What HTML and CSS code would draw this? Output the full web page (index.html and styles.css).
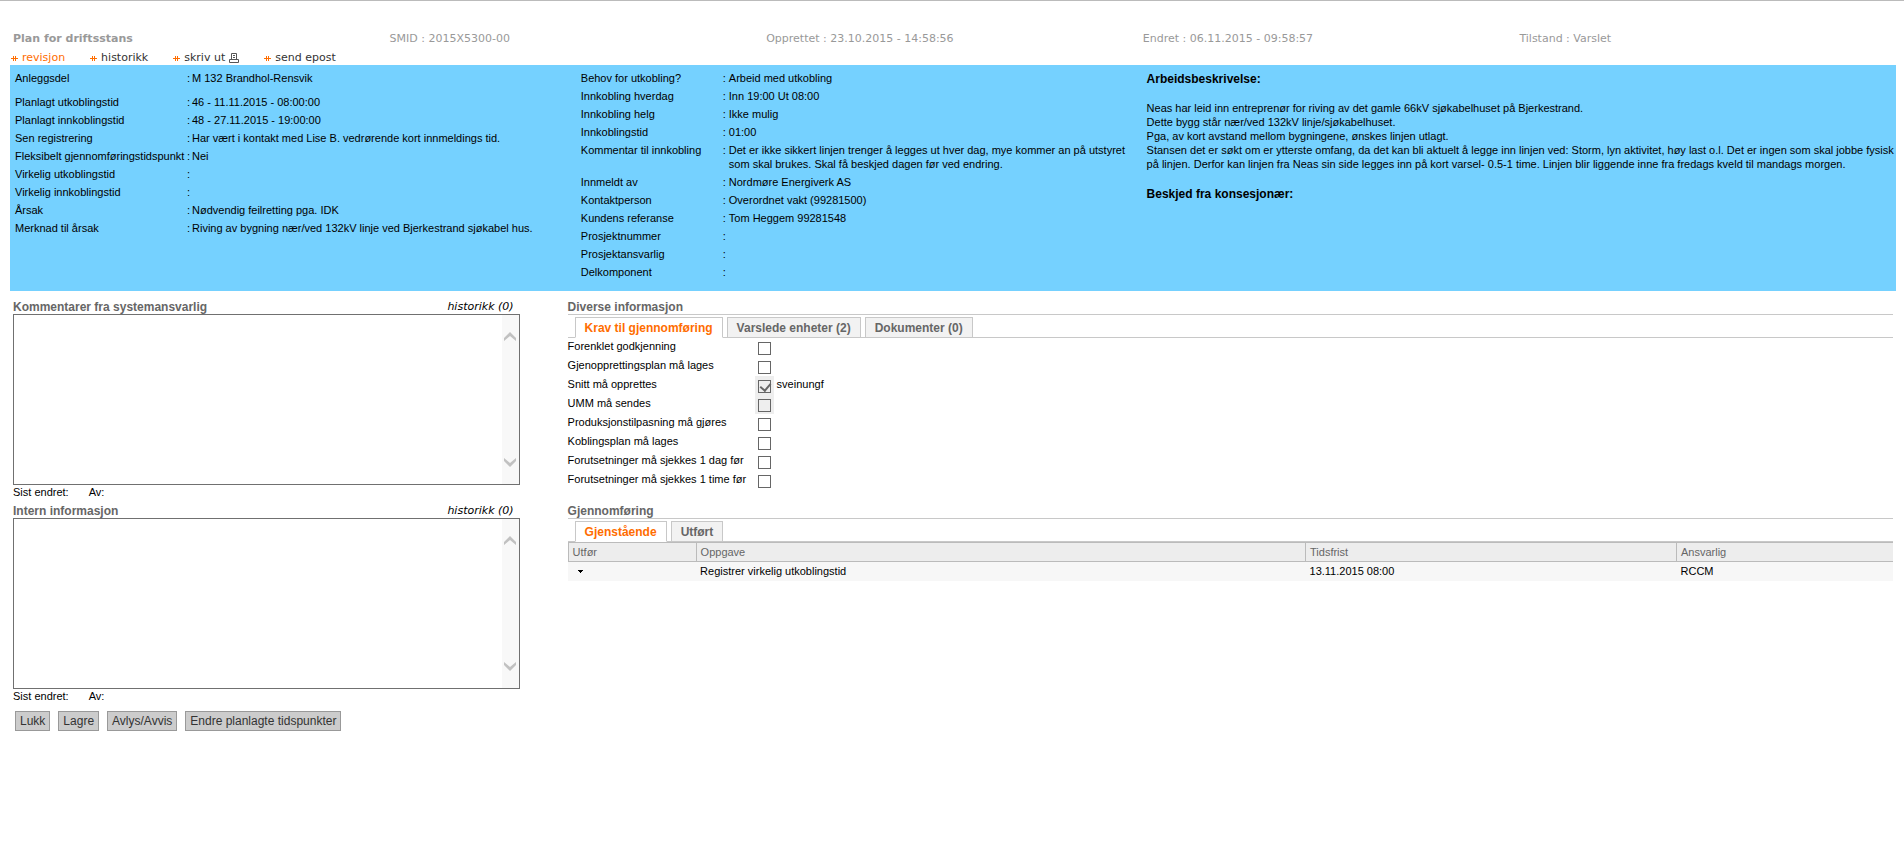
FILE: index.html
```html
<!DOCTYPE html>
<html lang="no">
<head>
<meta charset="utf-8">
<title>Plan for driftsstans</title>
<link rel="stylesheet" href="styles.css">
</head>
<body>
<svg class="defs" aria-hidden="true">
  <symbol id="arrow" viewBox="0 0 7 5"><path d="M0 2h7v1H0zM2 0h1v5H2zM4 0h1v5H4z"/></symbol>
  <symbol id="chev" viewBox="0 0 12 9"><path d="M6 0l6 6v3L6 4 0 9V6z"/></symbol>
</svg>
<header class="head">
  <h1 class="head-title">Plan for driftsstans</h1>
  <span>SMID : 2015X5300-00</span>
  <span>Opprettet : 23.10.2015 - 14:58:56</span>
  <span>Endret : 06.11.2015 - 09:58:57</span>
  <span>Tilstand : Varslet</span>
</header>
<nav class="nav">
  <a class="active" href="#"><svg class="arrow" viewBox="0 0 7 5"><use href="#arrow"/></svg>revisjon</a>
  <a href="#"><svg class="arrow" viewBox="0 0 7 5"><use href="#arrow"/></svg>historikk</a>
  <a href="#"><svg class="arrow" viewBox="0 0 7 5"><use href="#arrow"/></svg>skriv ut<svg class="printer" viewBox="0 0 10 10"><path d="M2.500 6.500v-6h5v6M4 2.500h2M4 4.500h2M.5 6.500h9v3h-9z"/></svg></a>
  <a href="#"><svg class="arrow" viewBox="0 0 7 5"><use href="#arrow"/></svg>send epost</a>
</nav>
<section class="info">
  <dl class="facts facts-plan">
    <div class="fact fact-lead"><dt>Anleggsdel</dt><dd>M 132 Brandhol-Rensvik</dd></div>
    <div class="fact"><dt>Planlagt utkoblingstid</dt><dd>46 - 11.11.2015 - 08:00:00</dd></div>
    <div class="fact"><dt>Planlagt innkoblingstid</dt><dd>48 - 27.11.2015 - 19:00:00</dd></div>
    <div class="fact"><dt>Sen registrering</dt><dd>Har vært i kontakt med Lise B. vedrørende kort innmeldings tid.</dd></div>
    <div class="fact"><dt>Fleksibelt gjennomføringstidspunkt</dt><dd>Nei</dd></div>
    <div class="fact"><dt>Virkelig utkoblingstid</dt><dd></dd></div>
    <div class="fact"><dt>Virkelig innkoblingstid</dt><dd></dd></div>
    <div class="fact"><dt>Årsak</dt><dd>Nødvendig feilretting pga. IDK</dd></div>
    <div class="fact"><dt>Merknad til årsak</dt><dd>Riving av bygning nær/ved 132kV linje ved Bjerkestrand sjøkabel hus.</dd></div>
  </dl>
  <dl class="facts facts-work">
    <div class="fact"><dt>Behov for utkobling?</dt><dd>Arbeid med utkobling</dd></div>
    <div class="fact"><dt>Innkobling hverdag</dt><dd>Inn 19:00 Ut 08:00</dd></div>
    <div class="fact"><dt>Innkobling helg</dt><dd>Ikke mulig</dd></div>
    <div class="fact"><dt>Innkoblingstid</dt><dd>01:00</dd></div>
    <div class="fact"><dt>Kommentar til innkobling</dt><dd>Det er ikke sikkert linjen trenger å legges ut hver dag, mye kommer an på utstyret som skal brukes. Skal få beskjed dagen før ved endring.</dd></div>
    <div class="fact"><dt>Innmeldt av</dt><dd>Nordmøre Energiverk AS</dd></div>
    <div class="fact"><dt>Kontaktperson</dt><dd>Overordnet vakt (99281500)</dd></div>
    <div class="fact"><dt>Kundens referanse</dt><dd>Tom Heggem 99281548</dd></div>
    <div class="fact"><dt>Prosjektnummer</dt><dd></dd></div>
    <div class="fact"><dt>Prosjektansvarlig</dt><dd></dd></div>
    <div class="fact"><dt>Delkomponent</dt><dd></dd></div>
  </dl>
  <div class="desc">
    <h2>Arbeidsbeskrivelse:</h2>
    <p>Neas har leid inn entreprenør for riving av det gamle 66kV sjøkabelhuset på Bjerkestrand.<br>Dette bygg står nær/ved 132kV linje/sjøkabelhuset.<br>Pga, av kort avstand mellom bygningene, ønskes linjen utlagt.<br>Stansen det er søkt om er ytterste omfang, da det kan bli aktuelt å legge inn linjen ved: Storm, lyn aktivitet, høy last o.l. Det er ingen som skal jobbe fysisk på linjen. Derfor kan linjen fra Neas sin side legges inn på kort varsel- 0.5-1 time. Linjen blir liggende inne fra fredags kveld til mandags morgen.</p>
    <h2>Beskjed fra konsesjonær:</h2>
  </div>
</section>
<main class="main">
  <div class="notes">
    <section class="block">
      <div class="bar"><label class="title" for="kommentar">Kommentarer fra systemansvarlig</label><a class="history" href="#">historikk (0)</a></div>
      <div class="box"><textarea id="kommentar"></textarea><div class="scroll"><svg class="chev" viewBox="0 0 12 9"><use href="#chev"/></svg><svg class="chev down" viewBox="0 0 12 9"><use href="#chev"/></svg></div></div>
      <div class="meta"><span>Sist endret:</span><span>Av:</span></div>
    </section>
    <section class="block">
      <div class="bar"><label class="title" for="intern">Intern informasjon</label><a class="history" href="#">historikk (0)</a></div>
      <div class="box"><textarea id="intern"></textarea><div class="scroll"><svg class="chev" viewBox="0 0 12 9"><use href="#chev"/></svg><svg class="chev down" viewBox="0 0 12 9"><use href="#chev"/></svg></div></div>
      <div class="meta"><span>Sist endret:</span><span>Av:</span></div>
    </section>
    <div class="buttons">
      <button type="button">Lukk</button>
      <button type="button">Lagre</button>
      <button type="button">Avlys/Avvis</button>
      <button type="button">Endre planlagte tidspunkter</button>
    </div>
  </div>
  <div class="details">
    <section class="block">
      <div class="bar ruled"><h2 class="title">Diverse informasjon</h2></div>
      <div class="tabs"><button class="tab current" type="button">Krav til gjennomføring</button><button class="tab" type="button">Varslede enheter (2)</button><button class="tab" type="button">Dokumenter (0)</button></div>
      <div class="checks">
        <div class="check"><label for="c1">Forenklet godkjenning</label><span class="cell"><input type="checkbox" id="c1"></span></div>
        <div class="check"><label for="c2">Gjenopprettingsplan må lages</label><span class="cell"><input type="checkbox" id="c2"></span></div>
        <div class="check"><label for="c3">Snitt må opprettes</label><span class="cell locked"><input type="checkbox" id="c3" checked disabled></span><span class="user">sveinungf</span></div>
        <div class="check"><label for="c4">UMM må sendes</label><span class="cell locked"><input type="checkbox" id="c4" disabled></span></div>
        <div class="check"><label for="c5">Produksjonstilpasning må gjøres</label><span class="cell"><input type="checkbox" id="c5"></span></div>
        <div class="check"><label for="c6">Koblingsplan må lages</label><span class="cell"><input type="checkbox" id="c6"></span></div>
        <div class="check"><label for="c7">Forutsetninger må sjekkes 1 dag før</label><span class="cell"><input type="checkbox" id="c7"></span></div>
        <div class="check"><label for="c8">Forutsetninger må sjekkes 1 time før</label><span class="cell"><input type="checkbox" id="c8"></span></div>
      </div>
    </section>
    <section class="block">
      <div class="bar ruled"><h2 class="title">Gjennomføring</h2></div>
      <div class="tabs"><button class="tab current" type="button">Gjenstående</button><button class="tab" type="button">Utført</button></div>
      <table class="tasks">
        <colgroup><col class="c-do"><col class="c-task"><col class="c-due"><col class="c-who"></colgroup>
        <thead><tr><th>Utfør</th><th>Oppgave</th><th>Tidsfrist</th><th>Ansvarlig</th></tr></thead>
        <tbody><tr><td><button class="menu" type="button" aria-label="Utfør"><svg class="caret" viewBox="0 0 5 3"><path d="M0 0h5v1H4v1H3v1H2V2H1V1H0z"/></svg></button></td><td>Registrer virkelig utkoblingstid</td><td>13.11.2015 08:00</td><td>RCCM</td></tr></tbody>
      </table>
    </section>
  </div>
</main>
</body>
</html>
```
FILE: styles.css
```css
* { box-sizing: border-box; }
body {
  margin: 0;
  border-top: 1px solid #bbb;
  background: #fff;
  color: #000;
  font: 11px/14px "Liberation Sans", Arial, sans-serif;
}
h1, h2, p, dl, dd { margin: 0; font-size: inherit; }
a { color: inherit; text-decoration: none; }
.defs { display: none; }

.head {
  display: grid;
  grid-template-columns: repeat(5, 1fr);
  padding: 31px 8px 0 13px;
  color: #999;
  font: 11px/14px Verdana, "DejaVu Sans", sans-serif;
}
.head-title { font-weight: bold; }
.nav {
  display: flex;
  gap: 25px;
  height: 19px;
  padding: 5px 0 0 11px;
  color: #333;
  font: 11px/14px Verdana, "DejaVu Sans", sans-serif;
}
.nav a { display: flex; align-items: center; }
.nav .active { color: #ff6d00; }
.arrow { width: 7px; height: 5px; margin-right: 4px; fill: #ff6d00; shape-rendering: crispEdges; }
.printer { width: 10px; height: 10px; margin-left: 4px; fill: none; stroke: #555; }

.info {
  display: grid;
  grid-template-columns: 3fr 3fr 4fr;
  min-height: 226px;
  margin: 0 8px 0 10px;
  padding: 6px 0;
  background: #75d1ff;
}
.fact { display: grid; padding: 0 4px 4px 5px; }
.fact dt { white-space: nowrap; }
.fact dd { display: flex; }
.fact dd::before { content: ":"; }
.facts-plan .fact { grid-template-columns: 172px 1fr; }
.facts-plan .fact dd::before { flex: 0 0 5px; }
.facts-work .fact { grid-template-columns: 142px 1fr; }
.facts-work .fact dd::before { flex: 0 0 6px; }
.facts-plan .fact-lead { padding-bottom: 10px; }
.desc { padding: 1px 0 0 5px; }
.desc h2 { font-size: 12px; }
.desc p { padding: 15px 0 16px; }

.main {
  display: grid;
  grid-template-columns: 59fr 141fr;
  margin: 0 11px 0 13px;
  padding-top: 8px;
}
.notes { padding-right: 48px; }
.block { height: 204px; }
.bar { display: flex; justify-content: space-between; height: 15px; line-height: 16px; }
.ruled { height: 16px; border-bottom: 1px solid #c8c8c8; }
.title { color: #666; font-size: 12px; font-weight: bold; }
.history { padding-right: 6px; font: italic 11px/16px Verdana, "DejaVu Sans", sans-serif; }
.box { display: flex; height: 171px; border: 1px solid #707070; }
.box textarea { flex: 1; border: 0; padding: 2px; resize: none; outline: 0; background: #fff; }
.scroll {
  display: flex;
  flex-direction: column;
  align-items: center;
  justify-content: space-between;
  width: 17px;
  padding: 17px 0;
  background: #f8f8f8;
}
.chev { width: 12px; height: 9px; fill: #c1c1c1; }
.down { rotate: 180deg; }
.meta { display: flex; gap: 20px; }
.buttons { display: flex; gap: 8px; padding: 4px 2px; }
.buttons button {
  height: 20px;
  padding: 0 4px;
  border: 1px solid #999;
  background: #ccc;
  color: #333;
  font: 12px/18px "Liberation Sans", Arial, sans-serif;
}

.tabs {
  display: flex;
  gap: 4px;
  height: 21px;
  margin-top: 2px;
  padding-left: 7px;
  border-bottom: 1px solid #c8c8c8;
}
.tab {
  height: 21px;
  padding: 0 9px;
  border: 1px solid #c8c8c8;
  background: #f2f2f2;
  color: #666;
  font: bold 12px/18px "Liberation Sans", Arial, sans-serif;
}
.current { border-bottom-color: #fff; background: #fff; color: #ff6d00; }
.check { display: grid; grid-template-columns: 187px 19px 1fr; height: 19px; }
.check label, .user { padding-top: 1px; }
.user { padding-left: 3px; }
.cell { display: flex; align-items: end; justify-content: center; padding-bottom: 2px; }
.locked { background: #eee; }
.cell input {
  appearance: none;
  width: 13px;
  height: 13px;
  margin: 0;
  border: 1px solid #666;
  background: #fff;
}
.cell input:disabled { background: #eee; }
.cell input:checked::before {
  content: "";
  display: block;
  width: 5px;
  height: 8px;
  margin: 0 0 0 3px;
  border: solid #666;
  border-width: 0 2px 2px 0;
  rotate: 40deg;
}

.tasks { width: 100%; border-collapse: collapse; table-layout: fixed; }
.c-do { width: 128px; }
.c-task { width: 46%; }
.c-due { width: 28%; }
.tasks th {
  height: 19px;
  padding: 0 4px;
  border: 1px solid #bbb;
  border-right: 0;
  background: #ededed;
  color: #666;
  font-weight: normal;
  text-align: left;
}
.tasks td { height: 19px; padding: 0 4px; background: #f7f7f7; }
.menu { display: flex; padding: 0 6px; border: 0; background: none; }
.caret { width: 5px; height: 3px; }
```
